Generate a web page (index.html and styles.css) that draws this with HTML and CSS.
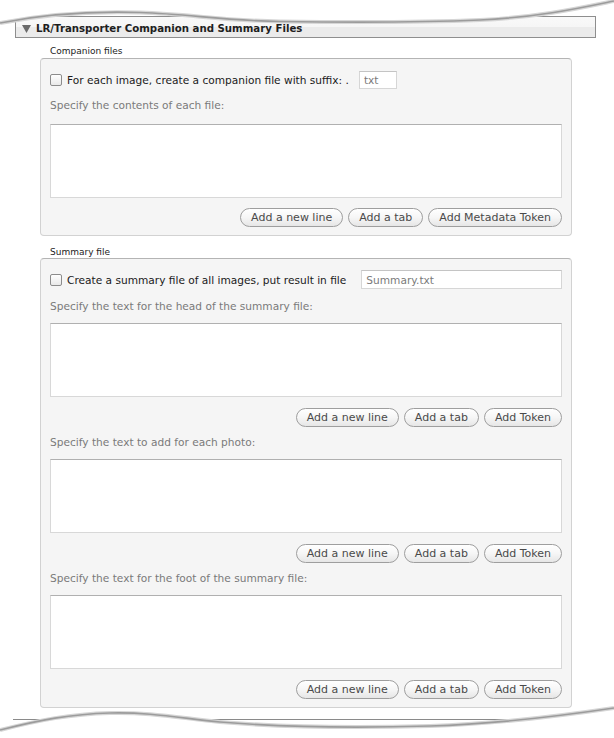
FILE: index.html
```html
<!DOCTYPE html>
<html>
<head>
<meta charset="utf-8">
<link rel="stylesheet" href="styles.css">
</head>
<body>
<div class="page">
  <div class="header">
    <svg class="disclosure" width="9" height="8" viewBox="0 0 9 8"><polygon points="0,0 9,0 4.5,8" fill="#6a6a6a"/></svg>
    <span class="title">LR/Transporter Companion and Summary Files</span>
  </div>
  <div class="content">
    <div class="group-label">Companion files</div>
    <div class="group group-companion">
      <div class="check-row">
        <span class="checkbox"></span>
        <span class="check-text">For each image, create a companion file with suffix: .</span>
        <span class="field field-suffix">txt</span>
      </div>
      <div class="field-label first-label">Specify the contents of each file:</div>
      <div class="textarea first-area"></div>
      <div class="buttons first-buttons">
        <span class="btn">Add a new line</span>
        <span class="btn">Add a tab</span>
        <span class="btn">Add Metadata Token</span>
      </div>
    </div>

    <div class="group-label summary-label">Summary file</div>
    <div class="group group-summary">
      <div class="check-row summary-row">
        <span class="checkbox"></span>
        <span class="check-text">Create a summary file of all images, put result in file</span>
        <span class="field field-summary">Summary.txt</span>
      </div>
      <div class="field-label head-label">Specify the text for the head of the summary file:</div>
      <div class="textarea"></div>
      <div class="buttons">
        <span class="btn">Add a new line</span>
        <span class="btn">Add a tab</span>
        <span class="btn">Add Token</span>
      </div>
      <div class="field-label">Specify the text to add for each photo:</div>
      <div class="textarea"></div>
      <div class="buttons">
        <span class="btn">Add a new line</span>
        <span class="btn">Add a tab</span>
        <span class="btn">Add Token</span>
      </div>
      <div class="field-label">Specify the text for the foot of the summary file:</div>
      <div class="textarea"></div>
      <div class="buttons">
        <span class="btn">Add a new line</span>
        <span class="btn">Add a tab</span>
        <span class="btn">Add Token</span>
      </div>
    </div>
  </div>

  <svg class="torn torn-top" width="614" height="30" viewBox="0 0 614 30">
    <path d="M0,0 L614,0 L614,1 C580,8 540,17 480,20 C420,22.5 350,22.5 280,21.5 C220,20.5 190,14 140,12.5 C90,11 40,15 0,23 Z" fill="#ffffff"/>
    <path d="M614,1 C580,8 540,17 480,20 C420,22.5 350,22.5 280,21.5 C220,20.5 190,14 140,12.5 C90,11 40,15 0,23" fill="none" stroke="#d6d6d6" stroke-width="4"/>
    <path d="M614,1 C580,8 540,17 480,20 C420,22.5 350,22.5 280,21.5 C220,20.5 190,14 140,12.5 C90,11 40,15 0,23" fill="none" stroke="#9c9c9c" stroke-width="1.6"/>
  </svg>
  <svg class="torn torn-bottom" width="614" height="40" viewBox="0 698 614 40">
    <line x1="13" y1="719.5" x2="535" y2="719.5" stroke="#8a8a8a" stroke-width="1"/>
    <path d="M0,730 C40,720 70,714 110,713 C150,712 180,718 220,722 C280,727 360,728 430,726 C500,724 560,716 614,708 L614,738 L0,738 Z" fill="#ffffff"/>
    <path d="M0,730 C40,720 70,714 110,713 C150,712 180,718 220,722 C280,727 360,728 430,726 C500,724 560,716 614,708" fill="none" stroke="#d6d6d6" stroke-width="4"/>
    <path d="M0,730 C40,720 70,714 110,713 C150,712 180,718 220,722 C280,727 360,728 430,726 C500,724 560,716 614,708" fill="none" stroke="#9c9c9c" stroke-width="1.6"/>
  </svg>
</div>
</body>
</html>
```

FILE: styles.css
```css
html, body {
  margin: 0;
  padding: 0;
  background: #ffffff;
}

body {
  font-family: "DejaVu Sans", "Liberation Sans", sans-serif;
  font-size: 10.6px;
  color: #1c1c1c;
}

.page {
  position: relative;
  width: 614px;
  height: 738px;
  overflow: hidden;
  padding: 16px 0 0 15px;
  box-sizing: border-box;
}

.header {
  width: 581px;
  height: 22px;
  box-sizing: border-box;
  border: 1px solid #8e8e8e;
  background: linear-gradient(#f9f9f9 0%, #f6f6f6 48%, #ebebeb 52%, #ebebeb 100%);
  display: flex;
  align-items: center;
  padding-left: 6px;
  padding-top: 3px;
  gap: 5px;
}

.disclosure {
  display: block;
}

.title {
  font-weight: bold;
  font-size: 10.2px;
  color: #1e1e1e;
}

.content {
  margin-left: 25px;
  width: 532px;
}

.group-label {
  font-size: 9px;
  line-height: 12px;
  height: 12px;
  margin-top: 7px;
  margin-left: 10px;
  margin-bottom: 1px;
  color: #222;
}

.summary-label {
  margin-top: 10px;
  margin-bottom: 0;
}

.group {
  background: #f5f5f5;
  border: 1px solid #d2d2d2;
  border-top-color: #b4b4b4;
  border-radius: 4px;
  padding: 12px 9px 8px 9px;
}

.group-summary {
  padding-top: 11px;
}

.check-row {
  display: flex;
  align-items: center;
  height: 18px;
}

.summary-row {
  height: 19px;
}

.checkbox {
  width: 12px;
  height: 12px;
  box-sizing: border-box;
  border: 1px solid #8c8c8c;
  border-radius: 2px;
  background: linear-gradient(#ffffff, #e9e9e9);
  margin-right: 5px;
  flex: none;
}

.check-text {
  white-space: nowrap;
  color: #1a1a1a;
}

.field {
  box-sizing: border-box;
  height: 100%;
  background: #ffffff;
  border: 1px solid #d6d6d6;
  border-top-color: #c4c4c4;
  color: #7a7a7a;
  display: flex;
  align-items: center;
  padding-left: 4px;
}

.field-suffix {
  width: 38px;
  margin-left: 10px;
}

.field-summary {
  flex: 1;
  margin-left: 15px;
}

.field-label {
  color: #7a7a7a;
  line-height: 14px;
  height: 14px;
  margin-top: 8px;
}

.first-label {
  margin-top: 9px;
}

.head-label {
  margin-top: 10px;
}

.textarea {
  height: 74px;
  box-sizing: border-box;
  background: #ffffff;
  border: 1px solid #d8d8d8;
  border-top-color: #b0b0b0;
  margin-top: 10px;
}

.first-area {
  margin-top: 12px;
}

.buttons {
  display: flex;
  justify-content: flex-end;
  gap: 5px;
  margin-top: 11px;
}

.first-buttons {
  margin-top: 10px;
}

.btn {
  height: 19px;
  box-sizing: border-box;
  border: 1px solid #9e9e9e;
  border-radius: 10px;
  background: linear-gradient(#ffffff 0%, #f6f6f6 50%, #e6e6e6 100%);
  color: #4a4a4a;
  font-size: 11px;
  padding: 0 10px;
  display: flex;
  align-items: center;
  white-space: nowrap;
}

.torn {
  position: absolute;
  left: 0;
  display: block;
}

.torn-top {
  top: 0;
}

.torn-bottom {
  top: 698px;
}
```
